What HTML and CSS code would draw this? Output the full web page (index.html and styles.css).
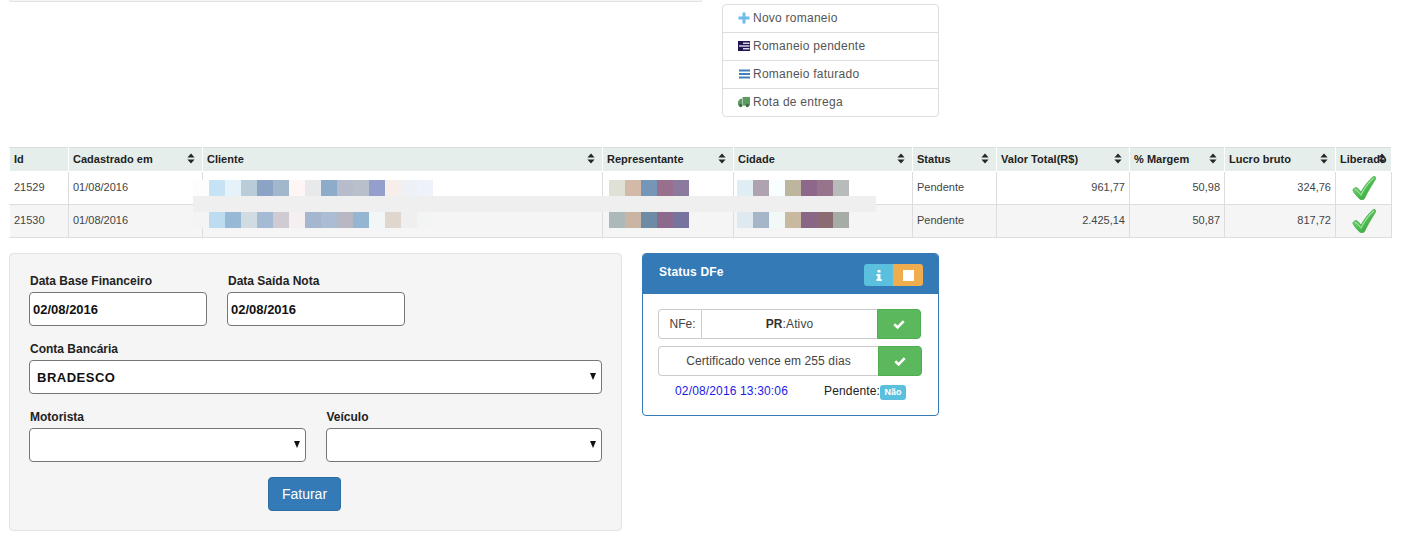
FILE: index.html
```html
<!DOCTYPE html>
<html lang="pt-BR">
<head>
<meta charset="utf-8">
<title>Romaneio</title>
<link rel="stylesheet" href="styles.css">
</head>
<body>
<svg class="defs" width="0" height="0" aria-hidden="true">
  <defs>
    <symbol id="sort" viewBox="0 0 8 11"><path d="M4 0.5 7.6 4.6H0.4zM4 10.5 0.4 6.4H7.6z" fill="#23282b"/></symbol>
    <linearGradient id="gr" x1="0" y1="0" x2="1" y2="1"><stop offset="0" stop-color="#8fe08a"/><stop offset="0.55" stop-color="#4cbb4f"/><stop offset="1" stop-color="#2a9a35"/></linearGradient>
    <symbol id="ok" viewBox="0 0 24 24">
      <path d="M0.8 14.2C1.5 12.2 3.6 11 5 11.8 6.600 12.700 8 15 9 16 12 10.500 16.500 4.500 21 0.800 22.500 -0.200 24.300 0.800 23.800 2.600 20.500 8 16 15.500 12.500 22.500 11.500 24 9.500 24.300 8 23.200 5.500 21 2.500 18 0.800 14.200Z" fill="url(#gr)" stroke="#3a9f41" stroke-width=".6"/>
      <path d="M3 13.500C5 14 7.500 17 9 19 12.500 12 17 6 21.800 2" fill="none" stroke="#b6efb0" stroke-width="1.200" stroke-linecap="round" opacity=".75"/>
    </symbol>
    <symbol id="tick" viewBox="0 0 12 10"><path d="M1.300 5.300 4.600 8.400 10.700 2.200" fill="none" stroke="#fff" stroke-width="2.600"/></symbol>
  </defs>
</svg>

<div class="page">
  <div class="top">
    <div class="well-end"></div>
    <ul class="menu">
      <li class="menu-item">
        <svg class="menu-icon" viewBox="0 0 12 12"><path d="M4.500 0.500h3v4H11.500v3H7.500v4h-3v-4H0.500v-3h4z" fill="#6cbcec"/></svg>
        Novo romaneio
      </li>
      <li class="menu-item">
        <svg class="menu-icon" viewBox="0 0 12 12"><path d="M0 1h12v10H0z" fill="#221450"/><path d="M5 2.500h6.500v1.500H5zM1 5.300h10.500v1.400H1zM5 8h6.500v1.500H5z" fill="#d4d4e2"/></svg>
        Romaneio pendente
      </li>
      <li class="menu-item">
        <svg class="menu-icon" viewBox="0 0 12 12"><path d="M1 1.500h11v2H1zM1 5h11v2H1zM1 8.500h11v2H1z" fill="#3f80bb"/></svg>
        Romaneio faturado
      </li>
      <li class="menu-item">
        <svg class="menu-icon" viewBox="0 0 12 12"><path d="M4.500 1h7.500v8.500H4.500zM0 5.500 2.200 2.800H4v6.700H0z" fill="#5d9a62"/><circle cx="2.700" cy="9.500" r="1.700" fill="#3b6f42"/><circle cx="9.300" cy="9.500" r="1.700" fill="#3b6f42"/></svg>
        Rota de entrega
      </li>
    </ul>
  </div>

  <div class="table-wrap">
    <table class="grid">
      <colgroup>
        <col class="c-id"><col class="c-cad"><col class="c-cli"><col class="c-rep"><col class="c-cid">
        <col class="c-sta"><col class="c-val"><col class="c-mar"><col class="c-luc"><col class="c-lib">
      </colgroup>
      <thead>
        <tr>
          <th>Id</th>
          <th>Cadastrado em<svg class="sort"><use href="#sort"/></svg></th>
          <th>Cliente<svg class="sort"><use href="#sort"/></svg></th>
          <th>Representante<svg class="sort"><use href="#sort"/></svg></th>
          <th>Cidade<svg class="sort"><use href="#sort"/></svg></th>
          <th>Status<svg class="sort"><use href="#sort"/></svg></th>
          <th>Valor Total(R$)<svg class="sort"><use href="#sort"/></svg></th>
          <th>% Margem<svg class="sort"><use href="#sort"/></svg></th>
          <th>Lucro bruto<svg class="sort"><use href="#sort"/></svg></th>
          <th>Liberado<svg class="sort"><use href="#sort"/></svg></th>
        </tr>
      </thead>
      <tbody>
        <tr>
          <td>21529</td><td>01/08/2016</td><td></td><td></td><td></td><td>Pendente</td>
          <td class="num">961,77</td><td class="num">50,98</td><td class="num">324,76</td>
          <td class="flag"><svg class="ok"><use href="#ok"/></svg></td>
        </tr>
        <tr class="alt">
          <td>21530</td><td>01/08/2016</td><td></td><td></td><td></td><td>Pendente</td>
          <td class="num">2.425,14</td><td class="num">50,87</td><td class="num">817,72</td>
          <td class="flag"><svg class="ok"><use href="#ok"/></svg></td>
        </tr>
      </tbody>
    </table>
    <svg class="redact" width="683" height="48" viewBox="0 0 683 48" shape-rendering="crispEdges" aria-hidden="true">
      <rect x="0" y="16" width="683" height="16" fill="#efefef"/>
      <g>
        <rect x="0" width="16" height="16" fill="#fdfdfd"/><rect x="16" width="16" height="16" fill="#c5e3f5"/><rect x="32" width="16" height="16" fill="#e6f2f9"/><rect x="48" width="16" height="16" fill="#b9ccd9"/><rect x="64" width="16" height="16" fill="#8ba4c5"/><rect x="80" width="16" height="16" fill="#a1b7cc"/><rect x="96" width="16" height="16" fill="#fdf6f5"/><rect x="112" width="16" height="16" fill="#e8e9ea"/><rect x="128" width="16" height="16" fill="#8dacca"/><rect x="144" width="16" height="16" fill="#b7bccd"/><rect x="160" width="16" height="16" fill="#b8c0ca"/><rect x="176" width="16" height="16" fill="#949fcd"/><rect x="192" width="16" height="16" fill="#f7eee9"/><rect x="208" width="16" height="16" fill="#edf1f5"/><rect x="224" width="16" height="16" fill="#eef3fb"/>
        <rect x="416" width="16" height="16" fill="#dfe0d6"/><rect x="432" width="16" height="16" fill="#d3b9a7"/><rect x="448" width="16" height="16" fill="#7596b6"/><rect x="464" width="16" height="16" fill="#98708e"/><rect x="480" width="16" height="16" fill="#8b7a9e"/>
        <rect x="544" width="16" height="16" fill="#dfedf5"/><rect x="560" width="16" height="16" fill="#aea3af"/><rect x="576" width="16" height="16" fill="#f8fdfe"/><rect x="592" width="16" height="16" fill="#bdb59e"/><rect x="608" width="16" height="16" fill="#8d688a"/><rect x="624" width="16" height="16" fill="#97738c"/><rect x="640" width="16" height="16" fill="#b7bbba"/>
      </g>
      <g transform="translate(0 32)">
        <rect x="0" width="16" height="16" fill="#f4f4f4"/><rect x="16" width="16" height="16" fill="#bedcf0"/><rect x="32" width="16" height="16" fill="#97b9d6"/><rect x="48" width="16" height="16" fill="#d0dce2"/><rect x="64" width="16" height="16" fill="#a5bbd4"/><rect x="80" width="16" height="16" fill="#d0cbd3"/><rect x="96" width="16" height="16" fill="#f5f0ef"/><rect x="112" width="16" height="16" fill="#a4b7cf"/><rect x="128" width="16" height="16" fill="#acbdd3"/><rect x="144" width="16" height="16" fill="#bab7c5"/><rect x="160" width="16" height="16" fill="#94b6d3"/><rect x="176" width="16" height="16" fill="#f2f6f7"/><rect x="192" width="16" height="16" fill="#e1d6ce"/><rect x="208" width="16" height="16" fill="#efefef"/><rect x="224" width="16" height="16" fill="#f3f4f4"/>
        <rect x="416" width="16" height="16" fill="#abb9b8"/><rect x="432" width="16" height="16" fill="#cab5a4"/><rect x="448" width="16" height="16" fill="#6e8ba5"/><rect x="464" width="16" height="16" fill="#8c6a8d"/><rect x="480" width="16" height="16" fill="#77739f"/>
        <rect x="544" width="16" height="16" fill="#dfe9f0"/><rect x="560" width="16" height="16" fill="#a5b6c8"/><rect x="576" width="16" height="16" fill="#f2f7f8"/><rect x="592" width="16" height="16" fill="#cab9a1"/><rect x="608" width="16" height="16" fill="#8a6686"/><rect x="624" width="16" height="16" fill="#8b6a74"/><rect x="640" width="16" height="16" fill="#a5ada5"/>
      </g>
    </svg>
  </div>

  <div class="bottom">
    <form class="well">
      <div class="field-row">
        <label class="field field-date">
          <span class="label">Data Base Financeiro</span>
          <input class="control date" type="text" value="02/08/2016">
        </label>
        <label class="field field-date">
          <span class="label">Data Saída Nota</span>
          <input class="control date" type="text" value="02/08/2016">
        </label>
      </div>
      <div class="field-row">
        <label class="field field-full">
          <span class="label">Conta Bancária</span>
          <span class="select-wrap"><select class="control select bank"><option>BRADESCO</option></select></span>
        </label>
      </div>
      <div class="field-row">
        <label class="field field-half">
          <span class="label">Motorista</span>
          <span class="select-wrap"><select class="control select"><option></option></select></span>
        </label>
        <label class="field field-half">
          <span class="label">Veículo</span>
          <span class="select-wrap"><select class="control select"><option></option></select></span>
        </label>
      </div>
      <div class="actions"><button class="btn-primary" type="button">Faturar</button></div>
    </form>

    <section class="status">
      <header class="status-head">
        <h3 class="status-title">Status DFe</h3>
        <div class="btn-group">
          <span class="mini info"><svg width="6" height="11" viewBox="0 0 6 11"><path d="M1.500 0h3v2.500h-3zM0.500 4h4v5h1.200v2H0.500V9h1V6h-1z" fill="#fff"/></svg></span>
          <span class="mini warn"><span class="stop"></span></span>
        </div>
      </header>
      <div class="status-body">
        <div class="igroup g1">
          <span class="addon">NFe:</span>
          <span class="ivalue"><b>PR</b>:Ativo</span>
          <span class="ibtn"><svg class="tick"><use href="#tick"/></svg></span>
        </div>
        <div class="igroup g2">
          <span class="ivalue">Certificado vence em 255 dias</span>
          <span class="ibtn"><svg class="tick"><use href="#tick"/></svg></span>
        </div>
        <div class="status-foot">
          <span class="stamp">02/08/2016 13:30:06</span>
          <span class="pending">Pendente:<span class="badge">Não</span></span>
        </div>
      </div>
    </section>
  </div>
</div>
</body>
</html>
```
FILE: styles.css
```css
* { box-sizing: border-box; }
html, body { margin: 0; padding: 0; }
body {
  font-family: "Liberation Sans", Arial, sans-serif;
  font-size: 12px;
  color: #333;
  background: #fff;
}
.defs { position: absolute; }
.page { padding-left: 9px; width: 1402px; height: 536px; overflow: hidden; }

.top { display: flex; gap: 20px; height: 147px; align-items: flex-start; }
.well-end {
  width: 693px; height: 2px;
  background: #f5f5f5;
  border: 1px solid #e3e3e3; border-top: 0;
  border-radius: 0 0 3px 3px;
}
.menu {
  list-style: none; margin: 4px 0 0; padding: 0;
  width: 217px;
  border: 1px solid #ddd; border-radius: 4px;
}
.menu-item {
  display: flex; align-items: center;
  height: 28px; padding: 0 0 2px 15px;
  color: #555; letter-spacing: .25px;
  border-bottom: 1px solid #ddd;
}
.menu-item:last-child { border-bottom: 0; height: 27px; }
.menu-icon { width: 12px; height: 12px; margin-right: 3px; flex: none; }

.table-wrap { position: relative; }
.grid {
  border-collapse: collapse; table-layout: fixed;
  width: 1382px;
  font-size: 11px;
}
.c-id { width: 59px; } .c-cad { width: 134px; } .c-cli { width: 400px; }
.c-rep { width: 131px; } .c-cid { width: 179px; } .c-sta { width: 84px; }
.c-val { width: 133px; } .c-mar { width: 95px; } .c-luc { width: 111px; } .c-lib { width: 56px; }
.grid th {
  position: relative;
  height: 24px; padding: 0 4px 2px;
  text-align: left; font-weight: bold; color: #222;
  letter-spacing: .02px; white-space: nowrap;
  background: #e6eeec;
  border: 1px solid #fff; border-top: 1px solid #ddd; border-bottom: 1px solid #fff;
}
.grid td {
  height: 33px; padding: 0 4px 2px;
  color: #444;
  border: 1px solid #ddd;
  background: #fff;
}
.grid td:first-child { border-left-color: #fff; }
.grid tr.alt td { background: #f5f5f5; }
.grid td.num { text-align: right; }
.grid td.flag { padding: 0; text-align: center; line-height: 0; }
.sort { position: absolute; right: 7px; top: 5px; width: 8px; height: 11px; }
.grid th:last-child .sort { right: 5px; }
.ok { width: 24px; height: 24px; }
.redact { position: absolute; left: 184px; top: 33px; }

.bottom { display: flex; gap: 20px; margin-top: 15px; align-items: flex-start; }
.well {
  width: 613px; height: 278px;
  padding: 19px 19px 0;
  background: #f5f5f5;
  border: 1px solid #e3e3e3; border-radius: 4px;
}
.field-row { display: flex; gap: 20px; margin-bottom: 15px; }
.field { display: block; }
.field-date { width: 178px; }
.field-full { width: 573px; }
.field-half { width: 276.500px; }
.label {
  display: block; height: 19px; line-height: 17px; padding-left: 1px;
  font-weight: bold; color: #222;
}
.control {
  display: block; width: 100%; height: 34px;
  background: #fff;
  border: 1px solid #767676; border-radius: 4px;
  font-family: inherit; color: #111;
}
.date { padding: 0 3px; font-size: 13px; font-weight: bold; }
.select-wrap { display: block; position: relative; }
.select-wrap::after {
  content: ""; position: absolute; right: 6px; top: 13px;
  border-left: 3.500px solid transparent; border-right: 3.500px solid transparent;
  border-top: 7px solid #111;
}
.select { appearance: none; -webkit-appearance: none; padding: 0 7px; }
.bank { font-size: 13px; font-weight: bold; letter-spacing: .5px; }
.actions { display: flex; justify-content: center; padding-right: 22px; }
.btn-primary {
  width: 73px; height: 34px; padding: 0;
  background: #337ab7; border: 1px solid #2e6da4; border-radius: 4px;
  color: #fff; font-family: inherit; font-size: 14px;
}

.status {
  width: 297px; height: 163px;
  border: 1px solid #337ab7; border-radius: 4px;
  overflow: hidden; background: #fff;
}
.status-head {
  display: flex; justify-content: space-between; align-items: flex-start;
  height: 40px; padding: 10px 15px 0 16px;
  background: #337ab7;
}
.status-title { margin: 0; font-size: 12px; font-weight: bold; color: #fff; line-height: 16px; letter-spacing: .2px; }
.btn-group { display: flex; height: 22px; }
.mini { display: flex; align-items: center; justify-content: center; height: 22px; }
.info { width: 29px; background: #5bc0de; border-radius: 3px 0 0 3px; }
.warn { width: 30px; background: #f0ad4e; border-radius: 0 3px 3px 0; }
.stop { width: 11px; height: 11px; background: #fff; }
.status-body { padding: 15px 0 0 15px; }
.igroup {
  display: flex; height: 30px; margin-bottom: 7px;
  border-radius: 4px;
}
.g1 { width: 263px; }
.g2 { width: 264px; }
.addon {
  width: 43px; padding-left: 5px; display: flex; align-items: center; justify-content: center;
  border: 1px solid #ccc; border-radius: 4px 0 0 4px; border-right: 0; color: #444;
}
.ivalue {
  flex: 1; display: flex; align-items: center; justify-content: center;
  border: 1px solid #ccc; border-right: 0; color: #444; letter-spacing: .11px;
}
.g2 .ivalue { border-radius: 4px 0 0 4px; }
.ivalue b { font-weight: bold; color: #333; }
.ibtn {
  width: 44px; display: flex; align-items: center; justify-content: center;
  background: #5cb85c; border: 1px solid #4cae4c; border-radius: 0 4px 4px 0;
}
.tick { width: 12px; height: 10px; }
.status-foot { display: flex; padding-left: 17px; height: 16px; margin-top: 1px; align-items: center; }
.stamp { color: #1a1ae6; width: 149px; letter-spacing: .15px; }
.pending { display: flex; align-items: center; color: #222; letter-spacing: .15px; }
.badge {
  display: block; width: 26px; height: 15px; margin-top: 2px;
  background: #5bc0de; border-radius: 3px;
  color: #fff; font-size: 9px; font-weight: bold; line-height: 15px; text-align: center; letter-spacing: 0;
}
```
